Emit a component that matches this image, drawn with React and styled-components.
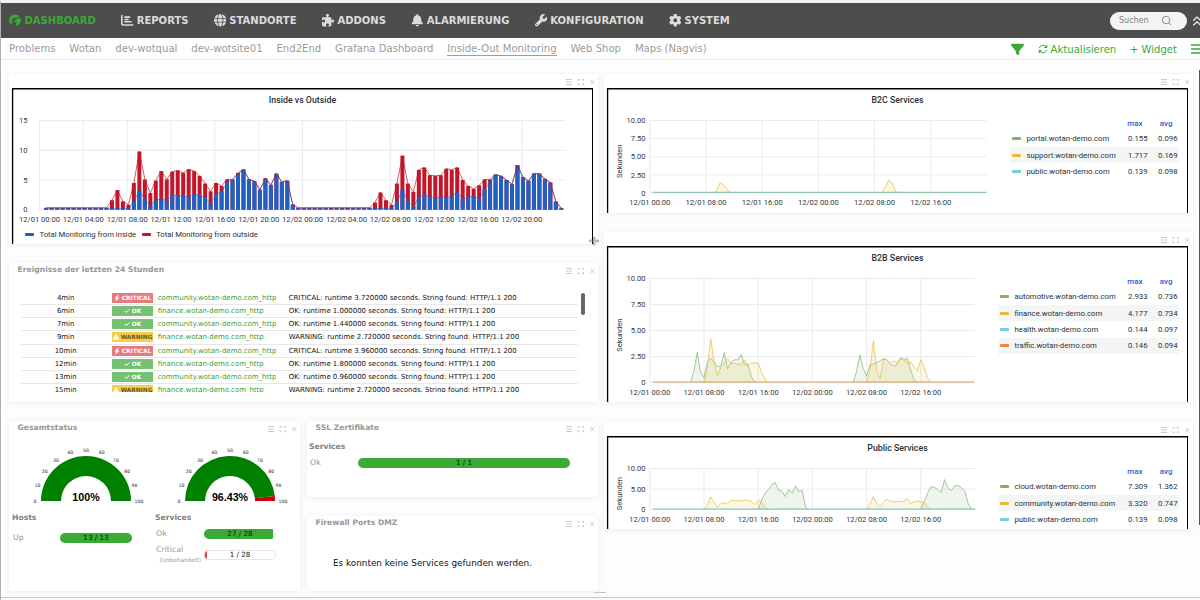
import React from 'react';
import styled, { createGlobalStyle } from 'styled-components';
import {
  FaBell,
  FaBolt,
  FaChartBar,
  FaCheck,
  FaFilter,
  FaGear,
  FaGlobe,
  FaPuzzlePiece,
  FaTriangleExclamation,
  FaWrench,
} from 'react-icons/fa6';
import { FiChevronsUp, FiSearch } from 'react-icons/fi';

const GlobalStyle = createGlobalStyle`
  * {
    box-sizing: border-box;
  }

  body {
    margin: 0;
    background: #fff;
    font-family: 'DejaVu Sans', sans-serif;
    overflow: hidden;
  }
`;

// Page shell
const Page = styled.div`
  position: relative;
  width: 1200px;
  height: 600px;
  overflow: hidden;
  display: flex;
  flex-direction: column;
  background: #fdfdfd;
  border-top: 3px solid #eff1f4;
  border-left: 1px solid #b0b0b0;
`;

const Header = styled.header`
  flex: none;
  height: 35px;
  display: flex;
  align-items: center;
  background: #4d4d4d;
  padding-left: 8px;
`;

const MainNav = styled.nav`
  display: flex;
  gap: 25.4px;
  flex: 1;
`;

const NavItem = styled.a`
  display: flex;
  align-items: center;
  gap: 3px;
  color: ${props => (props.$active ? '#3aaa35' : '#dcdcdc')};
  font-size: 10.02px;
  font-weight: 700;
  white-space: nowrap;

  svg {
    width: 12.5px;
    height: 12.5px;
  }
`;

const Search = styled.div`
  width: 77px;
  height: 18px;
  margin-right: 5px;
  padding: 0 15px 0 9px;
  border-radius: 9px;
  background: #f4f4f4;
  color: #808080;
  font-size: 8px;
  display: flex;
  align-items: center;
  justify-content: space-between;

  svg {
    width: 11px;
    height: 11px;
  }
`;

const Collapse = styled.div`
  width: 8px;
  overflow: hidden;
  color: #e4e4e4;
  display: flex;

  svg {
    flex: none;
    width: 16px;
    height: 16px;
    margin-left: -3px;
  }
`;

const SubHeader = styled.div`
  flex: none;
  height: 22px;
  display: flex;
  align-items: center;
  padding: 1px 0 0 8px;
  background: #fff;
  border-bottom: 1px solid #ececec;
`;

const Tabs = styled.nav`
  display: flex;
  flex: 1;
  gap: 13.9px;
`;

const Tab = styled.a`
  color: #9a9a9a;
  font-size: 10.09px;
  line-height: 12px;
  white-space: nowrap;
  border-bottom: 1px solid ${props => (props.$active ? '#6fbf6b' : 'transparent')};
`;

const Actions = styled.div`
  display: flex;
  align-items: center;
  color: #3aaa35;
  font-size: 10.1px;
`;

const Action = styled.span`
  display: flex;
  align-items: center;
  gap: 3px;
  margin-right: ${props => props.$gap}px;
  white-space: nowrap;

  svg {
    width: ${props => props.$icon || 10}px;
    height: ${props => props.$icon || 10}px;
  }
`;

const Burger = styled.svg`
  width: 9px;
  height: 10px;
  stroke: #3aaa35;
  stroke-width: 1.3;
`;

const Board = styled.main`
  flex: none;
  display: flex;
  gap: 6px;
  padding: 14px 0 0 8px;
  height: 531px;
`;

const Column = styled.div`
  width: 589px;
  display: flex;
  flex-direction: column;
`;

const Split = styled.div`
  display: grid;
  grid-template-columns: 291px 291px;
  gap: 7px;
`;

const Stack = styled.div`
  display: flex;
  flex-direction: column;
`;

// Widgets
const Card = styled.section`
  flex: none;
  height: ${props => props.$height}px;
  margin-bottom: ${props => props.$after || 0}px;
  background: #fff;
  box-shadow: 0 1px 6px rgba(0, 0, 0, 0.07);
  display: flex;
  flex-direction: column;
`;

const CardBar = styled.header`
  flex: none;
  height: 14px;
  padding: 0 3px 0 8.5px;
  display: flex;
  justify-content: space-between;
`;

const CardTitle = styled.h3`
  margin: 0;
  color: #979797;
  font-size: 7.65px;
  line-height: 13px;
  font-weight: 700;
  white-space: nowrap;
`;

const ToolIcons = styled.svg`
  width: 30px;
  height: 8px;
  margin-top: 4px;
  fill: none;
  stroke: #cbcbcb;
  stroke-width: 1;
`;

const Frame = styled.div`
  flex: 1;
  min-height: 0;
  overflow: hidden;
  margin: 0 5px 0 3px;
  border: solid #000;
  border-width: 1px 1px 0;
  box-shadow: inset 0 1px 0 rgba(0, 0, 0, 0.5), inset 1px 0 0 rgba(0, 0, 0, 0.25), -1px 0 0 rgba(0, 0, 0, 0.08);
  color: #2b3036;
  font-family: Roboto, sans-serif;
`;

const FrameTitle = styled.h4`
  margin: 0;
  height: 22px;
  line-height: 22px;
  text-align: center;
  font-size: 8.8px;
  font-weight: 500;
`;

const ChartRow = styled.div`
  display: flex;
  justify-content: space-between;
  padding-right: 8px;
`;

const Plot = styled.svg`
  display: block;
  flex: none;
  font-family: Roboto, sans-serif;
  font-size: 7.6px;

  text {
    fill: #33383d;
  }
`;

const BottomLegend = styled.div`
  display: flex;
  align-items: center;
  gap: 5.5px;
  height: 18px;
  padding-left: 12px;
  font-size: 7.7px;
`;

const Swatch = styled.i`
  width: 9px;
  height: 3px;
  border-radius: 1px;
  background: ${props => props.$color};
`;

const Legend = styled.div`
  width: ${props => props.$width}px;
  margin-top: 4.5px;
  font-size: 7.75px;
`;

const LegendRow = styled.div`
  height: 16.35px;
  display: grid;
  grid-template-columns: 9px 1fr 30px 30px;
  align-items: center;
  padding: 0 1.5px;
  background: ${props => (props.$striped ? '#f4f5f5' : 'transparent')};
  white-space: nowrap;

  span {
    padding-left: 6px;
  }

  b {
    font-weight: 400;
    text-align: right;
  }
`;

const LegendHead = styled(LegendRow)`
  height: 15.2px;
  padding-top: 1.6px;
  color: #1f62e0;
  font-size: 8px;

  b {
    font-weight: 500;
    padding-right: 5px;
  }
`;

// Event list
const Events = styled.div`
  height: 100px;
  margin: 14.5px 13px 0 12px;
  overflow: hidden;
  display: flex;
  justify-content: space-between;
`;

const EventRows = styled.div`
  width: 557px;
`;

const EventRow = styled.div`
  height: 13.27px;
  display: grid;
  grid-template-columns: 91.3px 45.4px 131px 1fr;
  align-items: center;
  border-bottom: 1px solid #e8e8e8;
  color: #111;
  font-size: 6.96px;
  white-space: nowrap;
`;

const EventTime = styled.span`
  padding-right: 2px;
  text-align: center;
`;

const Host = styled.a`
  color: #3aa035;
`;

const badgeColors = {
  CRITICAL: '#e8797c',
  OK: '#74c174',
  WARNING: '#f7cf4d',
};

const Badge = styled.span`
  width: 41px;
  height: 10px;
  display: flex;
  align-items: center;
  justify-content: center;
  gap: 1.5px;
  overflow: hidden;
  background: ${props => badgeColors[props.$state]};
  color: ${props => (props.$state === 'WARNING' ? '#6d5715' : '#fff')};
  font-size: 5.8px;
  line-height: 10px;
  font-weight: 700;

  svg {
    flex: none;
    width: 6px;
    height: 6px;
    color: #fff;
  }
`;

const ScrollThumb = styled.div`
  width: 4px;
  height: 22px;
  margin-top: 1px;
  border-radius: 2px;
  background: #666;
`;

// Status widgets
const Gauges = styled.div`
  display: flex;
  padding-left: 4.8px;
`;

const GaugeSvg = styled.svg`
  display: block;
  flex: none;
  width: 144px;
  height: 72px;
  font-family: 'DejaVu Sans', sans-serif;
  font-size: 4.6px;
  text-anchor: middle;

  .value {
    font: 700 10.7px 'Liberation Sans', sans-serif;
  }
`;

const Summary = styled.div`
  display: grid;
  grid-template-columns: 143px 1fr;
  padding: 5.5px 0 0 3px;
`;

const GroupTitle = styled.div`
  color: #808080;
  font-size: 7.65px;
  line-height: 10px;
  font-weight: 700;
`;

const StatusRow = styled.div`
  display: grid;
  grid-template-columns: ${props => props.$label || 48}px ${props => props.$bar || 72}px;
  align-items: center;
  margin-top: ${props => props.$top}px;
  padding-left: 1px;
  color: #999;
  font-size: 7.8px;
  line-height: 10px;
`;

const Note = styled.small`
  display: block;
  padding-left: 3.5px;
  font-size: 5.75px;
  white-space: nowrap;
`;

const Meter = styled.div`
  height: 10px;
  border-radius: 5px;
  text-align: center;
  color: #111;
  font-size: 7.2px;
  line-height: 10px;
  box-shadow: inset 0 0 0 1px ${props => (props.$fill > 50 ? 'transparent' : '#e6e6e6')};
  background: linear-gradient(
    90deg,
    ${props => props.$color || '#3aaa35'} ${props => props.$fill}%,
    ${props => (props.$fill > 50 ? '#eee' : 'transparent')} ${props => props.$fill}%
  );
`;

const SslBody = styled.div`
  padding: 7px 0 0 2px;
`;

const Message = styled.p`
  margin: 27px 0 0 26px;
  color: #111;
  font-size: 8.85px;
  line-height: 12px;
`;

// Window chrome lying over the board
const PageThumb = styled.div`
  position: absolute;
  top: 67px;
  right: 0;
  width: 1px;
  height: 455px;
  background: #555;
`;

const ResizeCursor = styled.svg`
  position: absolute;
  left: 588px;
  top: 234px;
  width: 10px;
  height: 8px;
  fill: none;
  stroke: #666;
  stroke-width: 0.7;
`;

const BoardHandle = styled.div`
  position: absolute;
  left: 593px;
  top: 589px;
  width: 12px;
  height: 1px;
  background: #c2c4cc;
`;

const BottomEdge = styled.footer`
  flex: none;
  margin-top: 6px;
  height: 3px;
  border-top: 1px solid #c8c8cc;
  background: #fafafa;
`;

const LABELS = ['12/01', '12/02'];

const pad = n => String(n).padStart(2, '0');

const DashboardIcon = () => (
  <svg viewBox="0 0 24 24">
    <path
      d="M3.5 20.5A11 11 0 0 1 20 4.2L14.8 8.1A6 6 0 0 0 6 15.5L8.5 13.6L3.5 20.5ZM21.5 6.5A11 11 0 0 1 17 21.6L13.2 22L14.4 12.8L10 16.8L11 10.5L21.5 6.5Z"
      fill="currentColor"
    />
    <path d="M15.3 8.4L8 14.5" stroke="#4d4d4d" strokeWidth="1.6" />
  </svg>
);

const RefreshIcon = () => (
  <svg viewBox="0 0 20 20" fill="none" stroke="currentColor" strokeWidth="2">
    <path d="M2.5 8.5A7.6 7.6 0 0 1 16 5.5M17.5 11.5A7.6 7.6 0 0 1 4 14.5" />
    <path d="M18.5 1V8H11.5ZM1.5 19V12H8.5Z" fill="currentColor" stroke="none" />
  </svg>
);

const Tools = () => (
  <ToolIcons viewBox="0 0 30 8">
    <path d="M1 1.5h6M1 4h6M1 6.5h6" />
    <path d="M13 3V1.5h1.7M16.8 1.5h1.7V3M18.5 5v1.7h-1.7M14.7 6.7H13V5" />
    <path d="M25.2 2l4.2 4.2M29.4 2l-4.2 4.2" />
  </ToolIcons>
);

// Half-hourly runtimes measured from inside and outside
const idle = n => Array(n).fill(0.3);
const OUTSIDE = [
  ...idle(12), 1.6, 3.3, 1.4, 0.8, 4.5, 9.8, 5.1, 2.8, 4.9, 6.5, 5.1, 6.4, 6.6, 6.2, 6.8, 6.5, 5.7, 4.4, 3.1,
  4.5, 4, 5.1, 5.1, 6.2, 6.8, 5.1, 4.8, 3.4, 5.3, 4.2, 6.1, 4.7, 4.9, 0.9, ...idle(14), 1.2, 2.9, 1.6, 0.8,
  4.4, 9.1, 4.4, 3, 6.7, 7.1, 5.8, 5.7, 5.8, 6.9, 6.7, 7.1, 5, 4, 3.5, 4.1, 5.1, 5.1, 5.9, 5.7, 5, 4.3, 7.5,
  5.5, 4.9, 6.1, 6.1, 5.2, 4.6, 1.4, 0.3,
];
const INSIDE = [
  ...idle(12), 0.2, 0.2, 0.2, 0.2, 1.4, 3.2, 1.8, 0.6, 1.6, 1.8, 1.5, 2.5, 2.4, 2.3, 2.1, 2.6, 2.4, 2, 1.1,
  2.6, 3, 4.6, 5, 6, 6.7, 5.1, 4.8, 3.3, 5.2, 4.1, 6, 4.6, 4.8, 0.8, ...idle(14), 0.2, 0.2, 0.2, 0.2,
  1.3, 3.3, 1.5, 0.5, 2.1, 2.6, 2.1, 1.9, 2.1, 2.1, 2.2, 2.9, 1.8, 2.1, 2.3, 1.8, 3.4, 4.6, 5.9, 5.6, 5, 4.3, 7.5,
  5.4, 4.8, 6, 6, 5.1, 4.5, 1.3, 0.2,
];

function BarChart() {
  const base = 98.7;
  const unit = 5.94;
  const x = i => 33.2 + i * 5.48;
  const y = v => base - v * unit;
  const line = values => values.map((v, i) => `${x(i)},${y(v)}`).join(' ');

  return (
    <Plot width="579" height="114">
      {[0, 5, 10, 15].map(v => (
        <g key={v}>
          <path d={`M26 ${y(v)}H553`} stroke="#e9ebec" />
          <text x="14.5" y={y(v) + 2.7} textAnchor="end">{v}</text>
        </g>
      ))}
      {Array.from({ length: 12 }, (_, i) => (
        <g key={i}>
          <path d={`M${26.5 + i * 43.85} 9.7V${base}`} stroke="#e9ebec" />
          <text x={26.5 + i * 43.85} y="111" textAnchor="middle">
            {`${LABELS[i < 6 ? 0 : 1]} ${pad((i % 6) * 4)}:00`}
          </text>
        </g>
      ))}
      {OUTSIDE.map((v, i) => (
        <rect key={i} x={x(i) - 2} y={y(v)} width="4" height={v * unit} fill="#c4162a" />
      ))}
      {INSIDE.map((v, i) => (
        <rect key={i} x={x(i) - 2} y={y(v)} width="4" height={v * unit} fill="#1f60c4" />
      ))}
      <polyline points={line(INSIDE)} fill="none" stroke="#1f60c4" strokeWidth="0.6" />
      <polyline points={line(OUTSIDE)} fill="none" stroke="#c4162a" strokeWidth="0.7" />
    </Plot>
  );
}

// Each series is flat apart from its bursts, given as [first half hour, values]
const B2C = {
  title: 'B2C Services',
  height: 97,
  base: 82,
  step: 56.2,
  end: 378.5,
  ticks: [10, 7.5, 5, 2.5, 0],
  legendWidth: 169,
  series: [
    { name: 'portal.wotan-demo.com', max: '0.155', avg: '0.096', color: '#7eb26d', bursts: [] },
    {
      name: 'support.wotan-demo.com', max: '1.717', avg: '0.169', color: '#eab839',
      bursts: [
        [18, [0, 0.3, 1.4, 1.1, 0.5, 0]],
        [66, [0, 0.8, 1.75, 1.4, 0.2, 0]],
      ],
    },
    { name: 'public.wotan-demo.com', max: '0.139', avg: '0.098', color: '#6ed0e0', bursts: [] },
  ],
  baseline: '#78b9a0',
};

const B2B = {
  title: 'B2B Services',
  height: 128,
  base: 113.7,
  step: 54.2,
  end: 366.3,
  ticks: [10, 7.5, 5, 2.5, 0],
  legendWidth: 181,
  series: [
    {
      name: 'automotive.wotan-demo.com', max: '2.933', avg: '0.736', color: '#7eb26d',
      bursts: [
        [12, [0, 1.1, 2.9, 1, 0.5, 2, 2.35, 2, 1.5, 1.6, 2.9, 1.3, 2, 2.2, 2.2, 2.7, 1.75, 1.7, 0.6, 0]],
        [60, [0, 1.05, 2.65, 1.4, 0.65, 1.7, 1.8, 1.95, 2.1, 2.3, 2.2, 1.8, 1.6, 1.75, 2.35, 2.15, 2.4, 1.2, 0.3, 0]],
      ],
    },
    {
      name: 'finance.wotan-demo.com', max: '4.177', avg: '0.734', color: '#eab839',
      bursts: [
        [16, [0, 1.5, 4.2, 1.9, 0.65, 1.5, 1.85, 2.35, 1.8, 1.9, 1.75, 1.75, 2.2, 1.7, 1.9, 1.9, 1.9, 1, 0.35, 0]],
        [64, [0, 1.2, 4, 1.2, 0.4, 2.3, 2.2, 1.85, 2.1, 1.9, 2.4, 2.3, 1.85, 2, 1.5, 1.15, 2.2, 1.5, 0.5, 0]],
      ],
    },
    { name: 'health.wotan-demo.com', max: '0.144', avg: '0.097', color: '#6ed0e0', bursts: [] },
    { name: 'traffic.wotan-demo.com', max: '0.146', avg: '0.094', color: '#ef843c', bursts: [] },
  ],
  baseline: '#d99a62',
};

const PUBLIC = {
  title: 'Public Services',
  height: 70,
  base: 50.7,
  step: 54.2,
  end: 367.4,
  ticks: [10, 5, 0],
  legendWidth: 181,
  series: [
    {
      name: 'cloud.wotan-demo.com', max: '7.309', avg: '1.362', color: '#7eb26d',
      bursts: [
        [32, [0, 2.3, 3.95, 4.9, 6, 6.6, 4.8, 4.5, 3.2, 4.9, 4, 5.8, 4.35, 4.7, 0.5, 0]],
        [80, [0, 2.1, 4, 5.65, 5.4, 4.9, 4.1, 7.3, 5.3, 4.65, 5.8, 5.9, 5.3, 4.5, 1.5, 0]],
      ],
    },
    {
      name: 'community.wotan-demo.com', max: '3.320', avg: '0.747', color: '#eab839',
      bursts: [
        [16, [0, 1.1, 3.1, 1.8, 0.6, 1.5, 1.7, 1.45, 2.4, 2.2, 2.15, 2.15, 2.4, 2.3, 2.05, 1.2, 2.3, 1.8, 0.7, 0]],
        [64, [0, 1.3, 3.2, 1.5, 0.65, 1.8, 2.55, 2.1, 1.9, 2, 2, 2.1, 2.7, 1.5, 1.9, 2.1, 1.95, 1.8, 0.6, 0]],
      ],
    },
    { name: 'public.wotan-demo.com', max: '0.139', avg: '0.098', color: '#6ed0e0', bursts: [] },
  ],
  baseline: '#78bfb4',
};

function LineChart({ chart }) {
  const left = 41.8;
  const top = 9.5;
  const { base, step, end } = chart;
  const y = v => base - (v * (base - top)) / 10;
  const x = t => left + (t * step) / 16;

  return (
    <Plot width="380" height={chart.height}>
      {chart.ticks.map(v => (
        <g key={v}>
          <path d={`M${left} ${y(v)}H${end}`} stroke="#e9ebec" />
          <text x="37.5" y={y(v) + 2.7} textAnchor="end">{v === 0 ? '0' : v.toFixed(2)}</text>
        </g>
      ))}
      {Array.from({ length: 6 }, (_, i) => (
        <g key={i}>
          <path d={`M${left + i * step} ${top}V${base}`} stroke="#e9ebec" />
          <text x={left + i * step} y={base + 12} textAnchor="middle">
            {`${LABELS[i < 3 ? 0 : 1]} ${pad((i % 3) * 8)}:00`}
          </text>
        </g>
      ))}
      <text transform={`translate(13.5 ${(base + top) / 2 + 4.5}) rotate(-90)`} textAnchor="middle">
        Sekunden
      </text>
      {chart.series.map(s =>
        s.bursts.map(([start, values]) => (
          <polyline
            key={start}
            points={values.map((v, i) => `${x(start + i)},${y(v)}`).join(' ')}
            fill={s.color}
            fillOpacity="0.13"
            stroke={s.color}
            strokeOpacity="0.85"
            strokeWidth="0.8"
          />
        ))
      )}
      <path d={`M${left + 3} ${base - 0.7}H${end}`} stroke={chart.baseline} />
    </Plot>
  );
}

function ServiceWidget({ chart, height, after }) {
  return (
    <Card $height={height} $after={after}>
      <CardBar>
        <span />
        <Tools />
      </CardBar>
      <Frame>
        <FrameTitle>{chart.title}</FrameTitle>
        <ChartRow>
          <LineChart chart={chart} />
          <Legend $width={chart.legendWidth}>
            <LegendHead>
              <i />
              <span />
              <b>max</b>
              <b>avg</b>
            </LegendHead>
            {chart.series.map((row, i) => (
              <LegendRow key={row.name} $striped={i % 2 === 1}>
                <Swatch $color={row.color} />
                <span>{row.name}</span>
                <b>{row.max}</b>
                <b>{row.avg}</b>
              </LegendRow>
            ))}
          </Legend>
        </ChartRow>
      </Frame>
    </Card>
  );
}

const EVENTS = [
  ['4min', 'CRITICAL', 'community', '3.720000'],
  ['6min', 'OK', 'finance', '1.000000'],
  ['7min', 'OK', 'community', '1.440000'],
  ['9min', 'WARNING', 'finance', '2.720000'],
  ['10min', 'CRITICAL', 'community', '3.960000'],
  ['12min', 'OK', 'finance', '1.800000'],
  ['13min', 'OK', 'community', '0.960000'],
  ['15min', 'WARNING', 'finance', '2.720000'],
];

const stateIcons = {
  CRITICAL: FaBolt,
  OK: FaCheck,
  WARNING: FaTriangleExclamation,
};

function Gauge({ percent }) {
  const cx = 72;
  const cy = 66;
  const point = (r, p) => {
    const a = Math.PI * (1 - p / 100);
    return [cx + r * Math.cos(a), cy - r * Math.sin(a)];
  };
  const arc = (from, to) =>
    `M${point(45, from)}A45 45 0 0 1 ${point(45, to)}L${point(25, to)}A25 25 0 0 0 ${point(25, from)}Z`;

  return (
    <GaugeSvg viewBox="0 0 144 72">
      <path d={arc(0, percent)} fill="#008000" />
      {percent < 100 && <path d={arc(percent, 100)} fill="#cc0000" />}
      {Array.from({ length: 11 }, (_, i) => {
        const [x, y] = point(i === 10 ? 53 : 51, i * 10);
        return (
          <text key={i} x={x} y={y + 1.8} fill="#222">
            {i * 10}
          </text>
        );
      })}
      <text className="value" x={cx} y={cy}>{`${percent}%`}</text>
    </GaugeSvg>
  );
}

const NAV = [
  ['DASHBOARD', DashboardIcon],
  ['REPORTS', FaChartBar],
  ['STANDORTE', FaGlobe],
  ['ADDONS', FaPuzzlePiece],
  ['ALARMIERUNG', FaBell],
  ['KONFIGURATION', FaWrench],
  ['SYSTEM', FaGear],
];

const TABS = [
  'Problems',
  'Wotan',
  'dev-wotqual',
  'dev-wotsite01',
  'End2End',
  'Grafana Dashboard',
  'Inside-Out Monitoring',
  'Web Shop',
  'Maps (Nagvis)',
];

const App = () => (
  <Page>
    <GlobalStyle />
    <Header>
      <MainNav>
        {NAV.map(([label, Icon], i) => (
          <NavItem key={label} $active={i === 0}>
            <Icon />
            {label}
          </NavItem>
        ))}
      </MainNav>
      <Search>
        Suchen
        <FiSearch />
      </Search>
      <Collapse>
        <FiChevronsUp />
      </Collapse>
    </Header>

    <SubHeader>
      <Tabs>
        {TABS.map(label => (
          <Tab key={label} $active={label === 'Inside-Out Monitoring'}>{label}</Tab>
        ))}
      </Tabs>
      <Actions>
        <Action $gap={13.5} $icon={13}>
          <FaFilter />
        </Action>
        <Action $gap={13.5}>
          <RefreshIcon />
          Aktualisieren
        </Action>
        <Action $gap={14}>+ Widget</Action>
        <Burger viewBox="0 0 9 10">
          <path d="M0 1h9M0 5h9M0 9h9" />
        </Burger>
      </Actions>
    </SubHeader>

    <Board>
      <Column>
        <Card $height={170} $after={19}>
          <CardBar>
            <span />
            <Tools />
          </CardBar>
          <Frame>
            <FrameTitle>Inside vs Outside</FrameTitle>
            <BarChart />
            <BottomLegend>
              <Swatch $color="#1f60c4" />
              Total Monitoring from inside
              <Swatch $color="#c4162a" />
              Total Monitoring from outside
            </BottomLegend>
          </Frame>
        </Card>

        <Card $height={139} $after={19}>
          <CardBar>
            <CardTitle>Ereignisse der letzten 24 Stunden</CardTitle>
            <Tools />
          </CardBar>
          <Events>
            <EventRows>
              {EVENTS.map(([time, state, host, runtime]) => {
                const Icon = stateIcons[state];
                return (
                  <EventRow key={time}>
                    <EventTime>{time}</EventTime>
                    <Badge $state={state}>
                      <Icon />
                      {state}
                    </Badge>
                    <Host>{host}.wotan-demo.com_http</Host>
                    <span>{`${state}: runtime ${runtime} seconds. String found: HTTP/1.1 200`}</span>
                  </EventRow>
                );
              })}
            </EventRows>
            <ScrollThumb />
          </Events>
        </Card>

        <Split>
          <Card $height={170}>
            <CardBar>
              <CardTitle>Gesamtstatus</CardTitle>
              <Tools />
            </CardBar>
            <Gauges>
              <Gauge percent={100} />
              <Gauge percent={96.43} />
            </Gauges>
            <Summary>
              <div>
                <GroupTitle>Hosts</GroupTitle>
                <StatusRow $top={10.5} $label={47}>
                  Up
                  <Meter $fill={100}>13 / 13</Meter>
                </StatusRow>
              </div>
              <div>
                <GroupTitle>Services</GroupTitle>
                <StatusRow $top={6.5}>
                  Ok
                  <Meter $fill={96}>27 / 28</Meter>
                </StatusRow>
                <StatusRow $top={6}>
                  <span>
                    Critical
                    <Note>(Unbehandelt)</Note>
                  </span>
                  <Meter $fill={4} $color="#d9383c">1 / 28</Meter>
                </StatusRow>
              </div>
            </Summary>
          </Card>

          <Stack>
            <Card $height={76} $after={19}>
              <CardBar>
                <CardTitle>SSL Zertifikate</CardTitle>
                <Tools />
              </CardBar>
              <SslBody>
                <GroupTitle>Services</GroupTitle>
                <StatusRow $top={6} $bar={212}>
                  Ok
                  <Meter $fill={100}>1 / 1</Meter>
                </StatusRow>
              </SslBody>
            </Card>
            <Card $height={75}>
              <CardBar>
                <CardTitle>Firewall Ports DMZ</CardTitle>
                <Tools />
              </CardBar>
              <Message>Es konnten keine Services gefunden werden.</Message>
            </Card>
          </Stack>
        </Split>
      </Column>

      <Column>
        <ServiceWidget chart={B2C} height={139} after={19} />
        <ServiceWidget chart={B2B} height={170} after={20} />
        <ServiceWidget chart={PUBLIC} height={107} />
      </Column>
    </Board>
    <BottomEdge />

    <PageThumb />
    <BoardHandle />
    <ResizeCursor viewBox="0 0 10 8">
      <path d="M4.3 0v8M5.9 0v8M4 4H.6M2 2.4L.4 4L2 5.6M6 4h3.4M8 2.4L9.6 4L8 5.6" />
    </ResizeCursor>
  </Page>
);

export default App;
